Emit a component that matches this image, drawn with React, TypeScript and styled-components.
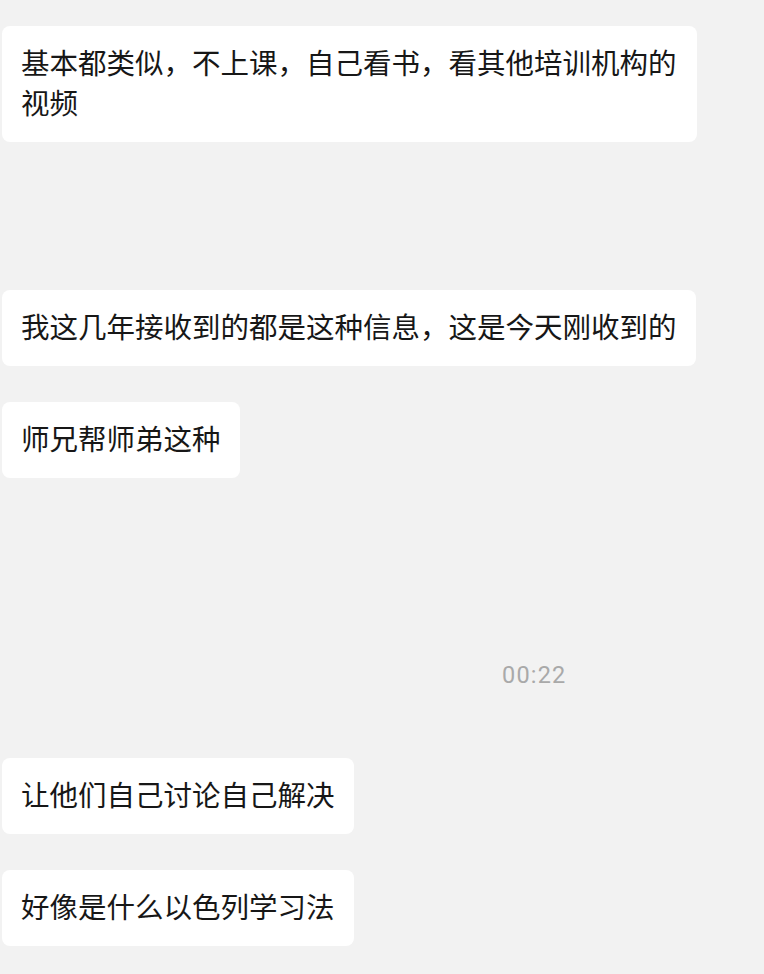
import styled, { createGlobalStyle } from "styled-components";

const GlobalStyle = createGlobalStyle`
  html, body {
    margin: 0;
    padding: 0;
    background: #f2f2f2;
  }
`;

const messages = [
  { id: 1, text: "基本都类似，不上课，自己看书，看其他培训机构的视频", gap: 26 },
  { id: 2, text: "我这几年接收到的都是这种信息，这是今天刚收到的", gap: 148 },
  { id: 3, text: "师兄帮师弟这种", gap: 36 },
];

const laterMessages = [
  { id: 5, text: "让他们自己讨论自己解决", gap: 68 },
  { id: 6, text: "好像是什么以色列学习法", gap: 36 },
];

function App() {
  return (
    <>
      <GlobalStyle />
      <ChatList>
        {messages.map((m) => (
          <Bubble key={m.id} $gap={m.gap}>
            {m.text}
          </Bubble>
        ))}
        <TimeRow>
          <Time>00:22</Time>
        </TimeRow>
        {laterMessages.map((m) => (
          <Bubble key={m.id} $gap={m.gap}>
            {m.text}
          </Bubble>
        ))}
      </ChatList>
    </>
  );
}

const ChatList = styled.div`
  width: 764px;
  min-height: 974px;
  box-sizing: border-box;
  padding-left: 2px;
  display: flex;
  flex-direction: column;
  align-items: flex-start;
  font-family: "Noto Sans CJK SC", "Noto Sans", sans-serif;
`;

const Bubble = styled.div<{ $gap: number }>`
  margin-top: ${(p) => p.$gap}px;
  max-width: 695px;
  box-sizing: border-box;
  padding: 16px 19px 20px 19px;
  background: #ffffff;
  border-radius: 8px;
  color: #171717;
  font-size: 28.5px;
  line-height: 40px;
`;

const TimeRow = styled.div`
  margin-top: 182px;
  align-self: stretch;
  display: flex;
  padding-left: 500px;
`;

const Time = styled.span`
  font-family: Roboto, "Liberation Sans", sans-serif;
  font-size: 23.5px;
  line-height: 30px;
  letter-spacing: 1.2px;
  color: #a9a9a9;
`;

export default App;
